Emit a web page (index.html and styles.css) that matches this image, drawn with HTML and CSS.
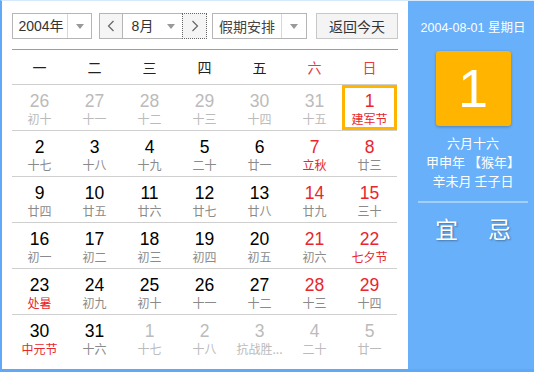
FILE: index.html
```html
<!DOCTYPE html>
<html lang="zh-CN">
<head>
<meta charset="utf-8">
<title>万年历</title>
<link rel="stylesheet" href="styles.css">
</head>
<body>
<div class="cal">
  <div class="main">
    <div class="toolbar">
      <div class="sel year"><span class="sel-text">2004年</span><span class="sel-arrow"></span></div>
      <div class="month-group">
        <div class="nav prev"><svg width="8" height="12" viewBox="0 0 8 12"><path d="M6.5 1 L1.5 6 L6.5 11" fill="none" stroke="#666" stroke-width="1.2"/></svg></div>
        <div class="msel"><span class="sel-text">8月</span><span class="tri"></span></div>
        <div class="nav next"><svg width="8" height="12" viewBox="0 0 8 12"><path d="M1.5 1 L6.5 6 L1.5 11" fill="none" stroke="#666" stroke-width="1.2"/></svg></div>
      </div>
      <div class="sel holiday"><span class="sel-text">假期安排</span><span class="sel-arrow"></span></div>
      <div class="btn">返回今天</div>
    </div>
    <div class="grid">
      <div class="wd">一</div><div class="wd">二</div><div class="wd">三</div><div class="wd">四</div><div class="wd">五</div><div class="wd red">六</div><div class="wd red">日</div>

      <div class="day other"><b>26</b><i>初十</i></div>
      <div class="day other"><b>27</b><i>十一</i></div>
      <div class="day other"><b>28</b><i>十二</i></div>
      <div class="day other"><b>29</b><i>十三</i></div>
      <div class="day other"><b>30</b><i>十四</i></div>
      <div class="day other"><b>31</b><i>十五</i></div>
      <div class="day we sel-day"><b>1</b><i class="fest">建军节</i></div>

      <div class="day"><b>2</b><i>十七</i></div>
      <div class="day"><b>3</b><i>十八</i></div>
      <div class="day"><b>4</b><i>十九</i></div>
      <div class="day"><b>5</b><i>二十</i></div>
      <div class="day"><b>6</b><i>廿一</i></div>
      <div class="day we"><b>7</b><i class="fest">立秋</i></div>
      <div class="day we"><b>8</b><i>廿三</i></div>

      <div class="day"><b>9</b><i>廿四</i></div>
      <div class="day"><b>10</b><i>廿五</i></div>
      <div class="day"><b>11</b><i>廿六</i></div>
      <div class="day"><b>12</b><i>廿七</i></div>
      <div class="day"><b>13</b><i>廿八</i></div>
      <div class="day we"><b>14</b><i>廿九</i></div>
      <div class="day we"><b>15</b><i>三十</i></div>

      <div class="day"><b>16</b><i>初一</i></div>
      <div class="day"><b>17</b><i>初二</i></div>
      <div class="day"><b>18</b><i>初三</i></div>
      <div class="day"><b>19</b><i>初四</i></div>
      <div class="day"><b>20</b><i>初五</i></div>
      <div class="day we"><b>21</b><i>初六</i></div>
      <div class="day we"><b>22</b><i class="fest">七夕节</i></div>

      <div class="day"><b>23</b><i class="fest">处暑</i></div>
      <div class="day"><b>24</b><i>初九</i></div>
      <div class="day"><b>25</b><i>初十</i></div>
      <div class="day"><b>26</b><i>十一</i></div>
      <div class="day"><b>27</b><i>十二</i></div>
      <div class="day we"><b>28</b><i>十三</i></div>
      <div class="day we"><b>29</b><i>十四</i></div>

      <div class="day last"><b>30</b><i class="fest">中元节</i></div>
      <div class="day last"><b>31</b><i>十六</i></div>
      <div class="day last other"><b>1</b><i>十七</i></div>
      <div class="day last other"><b>2</b><i>十八</i></div>
      <div class="day last other"><b>3</b><i>抗战胜...</i></div>
      <div class="day last other"><b>4</b><i>二十</i></div>
      <div class="day last other"><b>5</b><i>廿一</i></div>
    </div>
  </div>
  <div class="side">
    <div class="side-date">2004-08-01 星期日</div>
    <div class="big-day">1</div>
    <div class="lunar">
      <div>六月十六</div>
      <div>甲申年 【猴年】</div>
      <div>辛未月 壬子日</div>
    </div>
    <div class="divider"></div>
    <div class="yiji"><span>宜</span><span>忌</span></div>
  </div>
</div>
</body>
</html>
```
FILE: styles.css
```css
* { box-sizing: border-box; }
html, body { margin: 0; padding: 0; background: #fff; }
body { font-family: "Noto Sans CJK SC", "Liberation Sans", sans-serif; }

.cal {
  width: 534px;
  height: 372px;
  display: flex;
  border-left: 2px solid #5fa9f6;
  border-bottom: 3px solid #5fa9f6;
  border-top: 1px solid #d6e8fb;
  background: #fff;
}

.main {
  width: 406px;
  padding: 12px 10px 0 10px;
}

.toolbar {
  display: flex;
  align-items: center;
  height: 26px;
}

.sel {
  display: flex;
  height: 26px;
  border: 1px solid #b5b5b5;
  background: #fff;
  font-size: 13px;
  color: #333;
}
.sel-text {
  display: flex;
  align-items: center;
  justify-content: center;
  flex: 1;
  line-height: 24px;
}
.sel-arrow {
  width: 24px;
  border-left: 1px solid #d8d8d8;
  position: relative;
}
.sel-arrow::after, .tri::after {
  content: "";
  position: absolute;
  left: 50%;
  top: 50%;
  margin-left: -4px;
  margin-top: -2px;
  border-left: 4px solid transparent;
  border-right: 4px solid transparent;
  border-top: 5px solid #999;
}
.year { width: 80px; font-family: "Liberation Sans", "Noto Sans CJK SC", sans-serif; font-size: 14px; }
.year .sel-text { padding-left: 2px; }

.month-group {
  display: flex;
  height: 26px;
  margin-left: 7px;
  font-family: "Liberation Sans", "Noto Sans CJK SC", sans-serif;
}
.nav {
  width: 24px;
  height: 26px;
  display: flex;
  align-items: center;
  justify-content: center;
  background: #f5f5f5;
  border: 1px solid #b5b5b5;
}
.next { border: 1px dotted #666; width: 25px; }
.msel {
  width: 59px;
  display: flex;
  border-top: 1px solid #b5b5b5;
  border-bottom: 1px solid #b5b5b5;
  font-size: 14px;
  color: #333;
  background: #fff;
}
.msel .sel-text { padding-left: 2px; }
.tri { width: 22px; position: relative; }

.holiday { width: 95px; margin-left: 5px; }
.holiday .sel-text { font-size: 14px; color: #444; }
.holiday .sel-arrow { width: 25px; }

.btn {
  width: 82px;
  height: 26px;
  margin-left: 9px;
  border: 1px solid #c8c8c8;
  background: #f4f4f4;
  font-size: 14px;
  color: #333;
  display: flex;
  align-items: center;
  justify-content: center;
}

.grid {
  margin-top: 10px;
  border-top: 1px solid #5fa9f6;
  display: grid;
  grid-template-columns: repeat(7, 55px);
}

.wd {
  height: 35px;
  display: flex;
  align-items: center;
  justify-content: center;
  font-size: 14px;
  color: #222;
  border-bottom: 1px solid #cfcfcf;
  padding-bottom: 1px;
}
.wd.red { color: #e83b3b; }

.day {
  height: 46px;
  border-bottom: 1px solid #cfcfcf;
  display: flex;
  flex-direction: column;
  align-items: center;
  padding-top: 6px;
}
.day.last { border-bottom: 0; }
.day b {
  font-family: "Liberation Sans", Arial, sans-serif;
  font-weight: normal;
  font-size: 17.5px;
  line-height: 20px;
  color: #000;
}
.day i {
  font-style: normal;
  font-size: 12px;
  line-height: 16px;
  color: #8a8a8a;
}
.day.we b { color: #e8262d; }
.day.other b { color: #bbb; }
.day.other i { color: #bbb; }
.day i.fest { color: #e8262d; }
.sel-day { box-shadow: inset 0 0 0 3px #ffb400; }

.side {
  flex: 1;
  background: #68b0f9;
  color: #fff;
  display: flex;
  flex-direction: column;
  align-items: center;
  padding-left: 4px;
}
.side-date {
  margin-top: 18px;
  font-family: "Liberation Sans", "Noto Sans CJK SC", sans-serif;
  font-size: 12.5px;
  line-height: 18px;
}
.big-day {
  margin-top: 14px;
  width: 75px;
  height: 75px;
  background: #ffb400;
  border-radius: 3px;
  box-shadow: 0 1px 3px rgba(0,0,0,0.25);
  font-family: "Liberation Sans", Arial, sans-serif;
  font-size: 54px;
  line-height: 75px;
  text-align: center;
  color: #fff;
}
.lunar {
  margin-top: 7px;
  font-size: 13px;
  line-height: 19px;
  text-align: center;
}
.divider {
  margin-top: 11px;
  width: 110px;
  height: 2px;
  background: #a2cffb;
}
.yiji {
  margin-top: 10px;
  display: flex;
  gap: 30px;
  font-size: 23px;
  line-height: 30px;
  text-shadow: 1px 1px 2px rgba(0,0,0,0.35);
}
```
